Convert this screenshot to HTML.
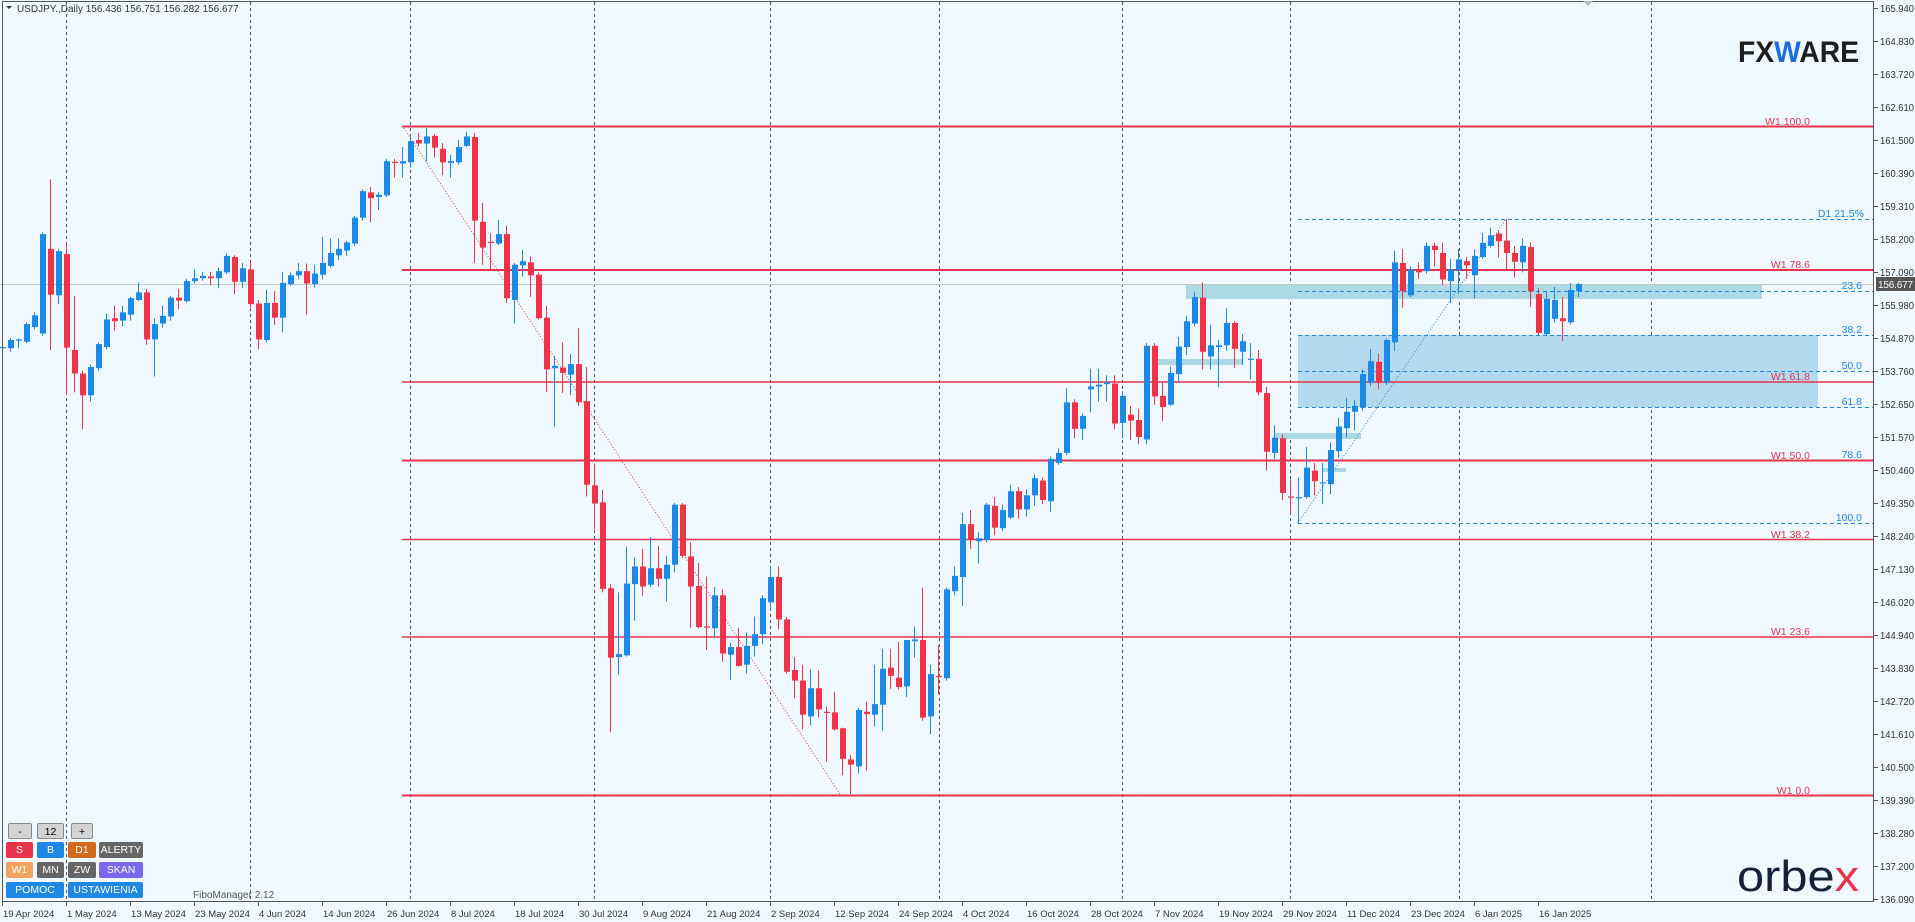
<!DOCTYPE html>
<html><head><meta charset="utf-8"><style>
html,body{margin:0;padding:0;background:#f0f8ff;}
body{width:1915px;height:922px;overflow:hidden;position:relative;font-family:"Liberation Sans",sans-serif;}
svg{position:absolute;left:0;top:0;}
.btn{position:absolute;height:16px;line-height:16px;text-align:center;font-size:10.5px;color:#fff;border-radius:2px;box-sizing:border-box;}
</style></head><body>
<svg id="s" width="1915" height="922" xmlns="http://www.w3.org/2000/svg" font-family="Liberation Sans, sans-serif">
<rect width="1915" height="922" fill="#f0f8ff"/>
<g id="grid" stroke="#555" stroke-width="1" stroke-dasharray="3,3"></g>
<rect x="1186" y="284" width="576" height="15" fill="#add8e6"/>
<rect x="1298" y="335" width="520" height="72" fill="#b3d9ee"/>
<rect x="1157" y="359" width="85" height="6" fill="#add8e6"/>
<rect x="1275" y="433" width="86" height="6" fill="#add8e6"/>
<rect x="1322" y="468" width="24" height="4" fill="#add8e6"/>
<line x1="0" y1="284.5" x2="1874" y2="284.5" stroke="#c8c8c8" stroke-width="1"/>
<g stroke="#1e88e5" stroke-width="1" stroke-dasharray="4,3">
<line x1="1298" y1="219.5" x2="1874" y2="219.5"/>
<line x1="1298" y1="291.5" x2="1874" y2="291.5"/>
<line x1="1298" y1="335.5" x2="1874" y2="335.5"/>
<line x1="1298" y1="371.5" x2="1874" y2="371.5"/>
<line x1="1298" y1="407.5" x2="1874" y2="407.5"/>
<line x1="1298" y1="460.5" x2="1874" y2="460.5"/>
<line x1="1298" y1="523.5" x2="1874" y2="523.5"/>
</g>
<g fill="#1e88e5" font-size="10.5" text-anchor="end">
<text x="1864" y="217">D1 21.5%</text>
<text x="1862" y="289">23.6</text>
<text x="1862" y="333">38.2</text>
<text x="1862" y="369">50.0</text>
<text x="1862" y="405">61.8</text>
<text x="1862" y="458">78.6</text>
<text x="1862" y="521">100.0</text>
</g>
<line x1="404" y1="128" x2="840" y2="794" stroke="#e8334a" stroke-width="1" stroke-dasharray="1,2"/>
<line x1="1298" y1="523" x2="1506" y2="219" stroke="#1e88e5" stroke-width="1" stroke-dasharray="1,2"/>
<g stroke="#e8334a">
<line x1="402" y1="126.5" x2="1874" y2="126.5" stroke-width="2"/>
<line x1="402" y1="270" x2="1874" y2="270" stroke-width="2"/>
<line x1="402" y1="382" x2="1874" y2="382" stroke-width="1.6"/>
<line x1="402" y1="460.5" x2="1874" y2="460.5" stroke-width="2"/>
<line x1="402" y1="539.5" x2="1874" y2="539.5" stroke-width="1.6"/>
<line x1="402" y1="637" x2="1874" y2="637" stroke-width="1.6"/>
<line x1="402" y1="795.5" x2="1874" y2="795.5" stroke-width="2"/>
</g>
<g fill="#e8334a" font-size="10.5" text-anchor="end">
<text x="1810" y="125">W1 100.0</text>
<text x="1810" y="268">W1 78.6</text>
<text x="1810" y="380">W1 61.8</text>
<text x="1810" y="459">W1 50.0</text>
<text x="1810" y="538">W1 38.2</text>
<text x="1810" y="635">W1 23.6</text>
<text x="1810" y="794">W1 0.0</text>
</g>
<g id="candles"></g>
<rect x="2.5" y="1.5" width="1871" height="900" fill="none" stroke="#555" stroke-width="1"/>
<g id="axis" font-size="10" fill="#333"></g>
<rect x="1876" y="277" width="39" height="14" fill="#555"/>
<text x="1878" y="288" font-size="10" fill="#fff" textLength="35">156.677</text>
<polygon points="1583,1 1593,1 1588,6" fill="#bbb"/>
<polygon points="6,6 12,6 9,9" fill="#333"/>
<text x="17" y="12" font-size="10" fill="#333">USDJPY.,Daily  156.436 156.751 156.282 156.677</text>
<text x="1738" y="62" font-size="30" font-weight="bold" fill="#1e1e1e" textLength="121" lengthAdjust="spacingAndGlyphs">FX<tspan fill="#1a6fe0">W</tspan>ARE</text>
<text x="1737" y="891" font-size="44" fill="#15213b" textLength="122" lengthAdjust="spacingAndGlyphs">orbe<tspan fill="#e8334a">x</tspan></text>
<text x="193" y="898" font-size="10" fill="#555">FiboManager 2.12</text>
</svg>
<div class="btn" style="left:8px;top:823px;width:24px;background:#d3d3d3;color:#000;border:1px solid #888">-</div>
<div class="btn" style="left:37px;top:823px;width:27px;background:#d3d3d3;color:#000;border:1px solid #888">12</div>
<div class="btn" style="left:71px;top:823px;width:22px;background:#d3d3d3;color:#000;border:1px solid #888">+</div>
<div class="btn" style="left:6px;top:842px;width:27px;background:#e8334a">S</div>
<div class="btn" style="left:37px;top:842px;width:27px;background:#1e88e5">B</div>
<div class="btn" style="left:68px;top:842px;width:28px;background:#d2691e">D1</div>
<div class="btn" style="left:99px;top:842px;width:44px;background:#666">ALERTY</div>
<div class="btn" style="left:6px;top:862px;width:27px;background:#f4a460">W1</div>
<div class="btn" style="left:37px;top:862px;width:27px;background:#666">MN</div>
<div class="btn" style="left:68px;top:862px;width:28px;background:#666">ZW</div>
<div class="btn" style="left:99px;top:862px;width:44px;background:#7b68ee">SKAN</div>
<div class="btn" style="left:6px;top:882px;width:58px;background:#1e88e5">POMOC</div>
<div class="btn" style="left:68px;top:882px;width:75px;background:#1e88e5">USTAWIENIA</div>
<script>
var NS="http://www.w3.org/2000/svg";
function el(p,t,a,txt){var e=document.createElementNS(NS,t);for(var k in a)e.setAttribute(k,a[k]);if(txt)e.textContent=txt;p.appendChild(e);return e;}
var grid=document.getElementById('grid');
[66,250,410,594,770,939,1122,1290,1459,1651].forEach(function(x){el(grid,'line',{x1:x+.5,y1:2,x2:x+.5,y2:901});});
var ax=document.getElementById('axis');
var labs="165.940 164.830 163.720 162.610 161.500 160.390 159.310 158.200 157.090 155.980 154.870 153.760 152.650 151.570 150.460 149.350 148.240 147.130 146.020 144.940 143.830 142.720 141.610 140.500 139.390 138.280 137.200 136.090".split(' ');
labs.forEach(function(l,i){var y=8+i*33;el(ax,'line',{x1:1874,y1:y+.5,x2:1878,y2:y+.5,stroke:'#555'});el(ax,'text',{x:1880,y:y+4,textLength:34,lengthAdjust:'spacingAndGlyphs'},l);});
var dates="19 Apr 2024,1 May 2024,13 May 2024,23 May 2024,4 Jun 2024,14 Jun 2024,26 Jun 2024,8 Jul 2024,18 Jul 2024,30 Jul 2024,9 Aug 2024,21 Aug 2024,2 Sep 2024,12 Sep 2024,24 Sep 2024,4 Oct 2024,16 Oct 2024,28 Oct 2024,7 Nov 2024,19 Nov 2024,29 Nov 2024,11 Dec 2024,23 Dec 2024,6 Jan 2025,16 Jan 2025".split(',');
dates.forEach(function(d,i){var x=2+64*i;el(ax,'line',{x1:x+.5,y1:902,x2:x+.5,y2:906,stroke:'#555'});el(ax,'text',{x:x+1,y:917,'font-size':9.5},d);});
var D=[
"b590,592,590,640 b578,592,575,598 b577,579,575,592 b551,581,548,583 b536,556,530,560 b398,567,395,571 r423,501,305,595 b427,502,423,517 r432,591,413,672 r595,635,503,667 r635,672,630,730 b624,672,620,683 b585,626,582,630 b543,590,533,594 r541,546,520,562 b531,545,520,555 b507,535,505,545 b497,510,480,512 r497,577,491,586 b551,577,541,640 b537,550,520,557 b506,538,503,545 r506,511,491,526 b478,512,474,514 b473,478,458,482 b469,473,462,477 r470,473,462,485 b461,473,455,490 b435,463,431,466 r437,479,434,500 b456,479,447,490 r458,517,443,523 r516,577,510,594 b515,578,493,582 r515,540,495,552 b481,540,462,565 b468,483,463,486 b461,468,447,475 r461,482,448,535 b465,483,450,489 b447,467,403,475 b430,452,405,455 b423,434,405,442 b412,426,410,435 b370,414,367,418 b325,370,322,375 r327,337,318,378 b331,335,326,357 b274,332,270,335 r275,277,270,302 b274,278,250,302 b240,276,230,285 r238,244,226,249 b232,244,218,275 r231,251,228,268 r253,276,243,298 b274,277,263,302 b250,276,238,280 b232,248,224,250 r233,375,226,447 r377,421,345,450 r411,413,396,458 b398,414,374,416 r398,507,384,515 b450,510,447,550 b444,451,425,470 r446,468,436,505 r467,541,463,543 r540,628,520,666 b622,626,605,725 r625,634,582,668 b619,637,602,672 r619,684,558,690 r682,824,624,844 r825,856,790,900 r854,1001,833,1007 r1000,1118,993,1245 b1112,1117,1007,1147 b992,1114,929,1116 b963,993,948,1055",
"r963,997,933,1013 b966,994,913,998 r966,984,928,997 b960,984,945,1023 b858,960,855,973 r858,945,855,948 r946,997,922,1067 r996,1066,957,1068 r1065,1067,980,1105 b1012,1068,998,1083 r1012,1111,1002,1125 b1100,1113,1093,1156 r1100,1132,1067,1133 b1098,1130,1075,1145 b1078,1098,1048,1116 b1017,1078,1012,1095 b981,1024,963,1038 r981,1053,963,1070 r1053,1142,1049,1145 r1139,1157,1117,1187 r1157,1215,1130,1240 b1170,1218,1138,1233 r1170,1206,1140,1220 r1210,1212,1201,1295 r1211,1240,1176,1242 r1238,1290,1237,1318 r1291,1300,1284,1350 b1207,1303,1203,1315 r1210,1214,1193,1310 b1197,1215,1130,1235 b1137,1198,1103,1242 r1135,1149,1103,1171 r1152,1168,1091,1172 b1088,1167,1088,1185 b1087,1090,1065,1118 r1088,1220,999,1225 b1146,1218,1130,1248 r1149,1151,1097,1180 b1002,1153,999,1157 b979,1005,963,1012 b891,981,872,1030 r891,918,867,933 b915,920,905,958 b858,918,855,922 r860,897,845,910 b867,898,858,903 b835,880,824,882 r835,866,828,882 b842,866,832,878 b813,842,806,860 r817,850,812,857 b780,852,776,870 b770,787,762,790 b684,770,660,774 r684,729,679,745 b707,729,703,748 b657,662,627,701 b654,657,627,683 b650,653,638,683 r652,720,638,730 b673,719,665,745 r705,715,690,748 r714,743,695,755 b588,747,583,755 r588,674,583,688 r673,692,650,716 b634,688,623,690 b589,636,573,650 b546,590,537,604 b505,550,497,555 r506,598,480,628 b587,606,552,628 b587,590,578,658 b549,587,524,596 r549,593,546,625 b580,598,568,620 b610,612,583,645 r610,667,595,672 r668,768,658,800 b744,770,723,780",
"r745,838,738,850 r844,846,815,873 b845,847,812,890 b795,845,760,848 r800,818,787,842 b820,822,787,857 b765,823,752,840 b725,767,710,778 b700,728,677,744 b690,700,680,732 b636,693,628,698 b614,650,593,656 r615,650,601,662 b578,650,575,654 b446,582,426,597 r447,495,423,523 b458,502,453,505 r459,463,446,474 b418,461,412,465 r418,425,413,453 r430,475,412,485 b458,478,440,515 b441,460,423,500 r444,451,437,474 b435,468,424,507 b413,437,396,440 b400,418,387,421 r397,410,392,438 r409,430,372,460 r430,445,418,472 b418,446,405,463 r420,495,412,522 r500,566,490,570 b508,568,495,570 b510,542,488,548 r541,546,505,580 b493,548,481,552 b483,495,481,505"
].join(' ').split(' ');
var cg=document.getElementById('candles');
D.forEach(function(s,i){
 var c=s[0]=='r'?'#ef3349':'#1e88e5';var v=s.slice(1).split(',').map(function(n){return n/1.70;});
 var x=2+8*i;
 el(cg,'line',{x1:x+.5,y1:v[2],x2:x+.5,y2:v[3],stroke:c,'stroke-width':1});
 var h=Math.max(1.2,v[1]-v[0]);
 el(cg,'rect',{x:x-2,y:v[0],width:6,height:h,fill:c});
});
</script>
</body></html>
